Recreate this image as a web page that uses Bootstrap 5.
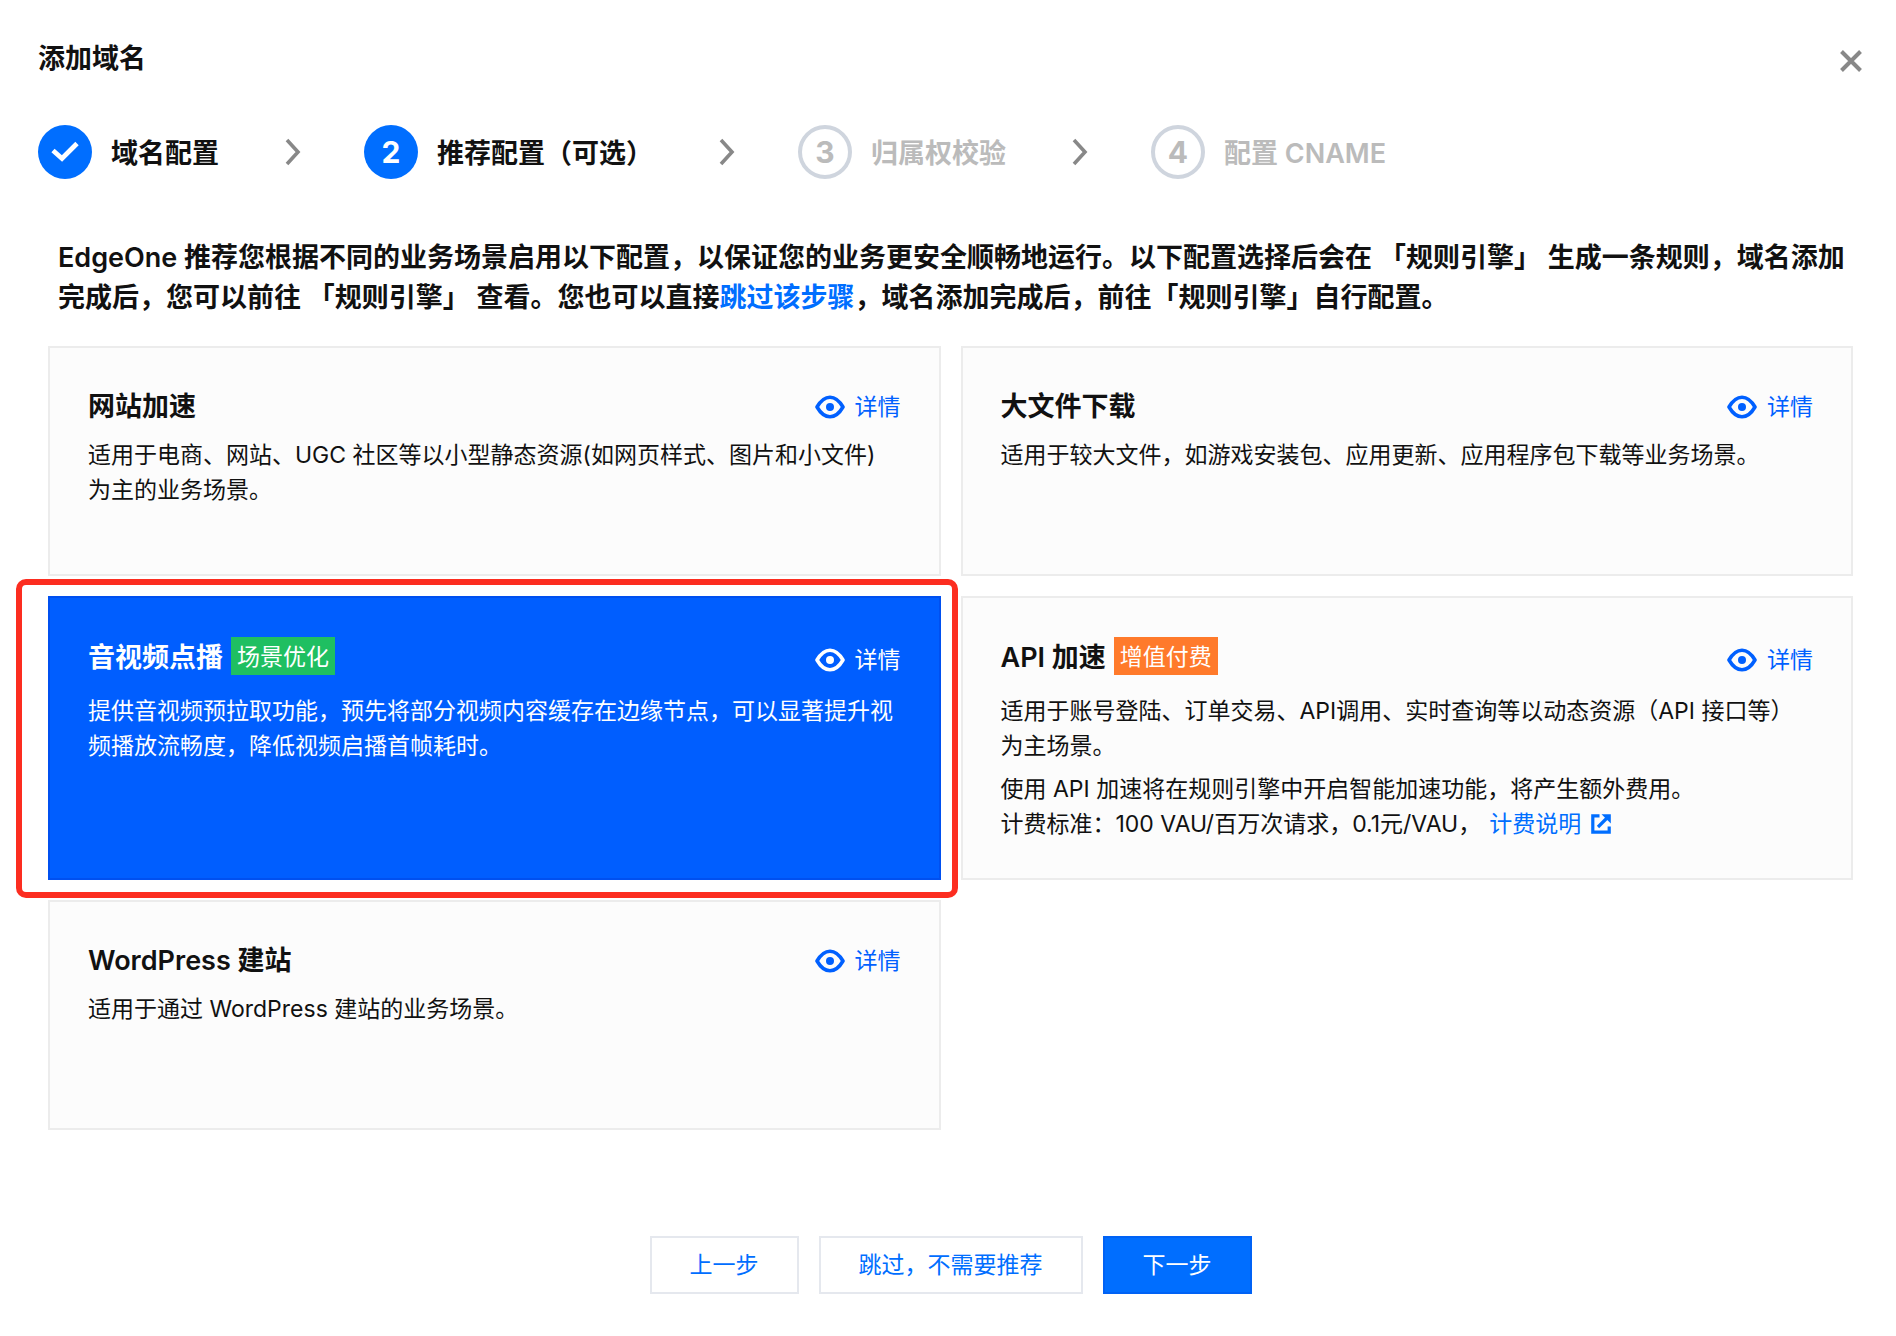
<!DOCTYPE html>
<html lang="zh-CN">
<head>
<meta charset="utf-8">
<meta name="viewport" content="width=device-width, initial-scale=1">
<title>添加域名</title>
<link href="https://cdn.jsdelivr.net/npm/bootstrap@5.3.0/dist/css/bootstrap.min.css" rel="stylesheet">
<style>
  body { font-family: Inter, "Noto Sans CJK SC", sans-serif; font-size: 23px; line-height: 35px; color: #111; background: #fff; }
  a { color: #006eff; text-decoration: none; }
  .page-pad { padding: 39px 33px 42px 38px; }
  .heading-text { font-size: 27px; line-height: 40px; font-weight: 600; margin: 0; }
  .close-btn { border: 0; background: none; padding: 4px 0 0; line-height: 0; color: #888; }
  .steps { margin-top: 46px; }
  .step-dot { width: 54px; height: 54px; font-size: 30px; font-weight: 700; background: #006eff; color: #fff; }
  .step-label { font-size: 27px; line-height: 40px; font-weight: 600; margin-left: 19px; padding-top: 3px; }
  .step-todo { color: #bbb; }
  .step-todo .step-dot { background: #fff; color: #bbb; border: 4px solid #cfd5de; }
  .step-arrow { margin: 0 63px 0 66px; color: #888; }
  .intro { font-size: 27px; line-height: 40px; font-weight: 600; margin: 59px 0 28px; padding-left: 20px; }
  .inner { padding: 0 10px; }
  .scene-grid { --bs-gutter-x: 20px; --bs-gutter-y: 20px; }
  .scene { min-height: 230px; padding: 39px 38px 36px; border: 2px solid #ececec; border-radius: 0; background: #fcfcfc; color: #111; }
  .scene-head { margin-bottom: 11px; }
  .has-tag { min-height: 46px; }
  .has-tag .scene-name { margin-bottom: 4px; }
  .tag { line-height: 36px; padding: 2px 6px 0; margin-bottom: 4px; color: #fff; background: #1fbf61; }
  .tag-paid { background: #ff7a2b; }
  .detail { gap: 10px; color: #0060ff; }
  .scene p { margin: 0; padding-right: 7px; }
  .scene p + p { margin-top: 8px; }
  .doc-link { margin-left: 8px; }
  .doc-link svg { margin: -4px 0 0 10px; }
  .scene-picked { background: #005eff; border-color: #0050f0; color: #fff; }
  .scene-picked .detail { color: #fff; }
  .focus-frame { position: relative; }
  .focus-frame::after { content: ""; position: absolute; inset: -17px -17px -18px -32px; border: 6px solid #fc2d20; border-radius: 10px; pointer-events: none; z-index: 2; }
  .actions { margin-top: 106px; gap: 20px; }
  .act { font-size: 23px; line-height: 34px; padding: 10px 38px; border-width: 2px; border-radius: 0; border-color: #e5e8ee; color: #006eff; background: #fff; }
  .act-main { background: #006eff; border-color: #0062f5; color: #fff; }
</style>
<script src="https://cdn.jsdelivr.net/npm/bootstrap@5.3.0/dist/js/bootstrap.bundle.min.js"></script>
</head>
<body>
<svg class="d-none" aria-hidden="true">
  <symbol id="eye" viewBox="0 0 30 24"><path d="M2 12C5.500 6 9.500 2.200 15 2.200S24.500 6 28 12C24.500 18 20.500 21.800 15 21.800S5.500 18 2 12Z" fill="none" stroke="currentColor" stroke-width="3.600" stroke-linejoin="round"/><circle cx="15" cy="12" r="4" fill="currentColor"/></symbol>
  <symbol id="chevron" viewBox="0 0 16 28"><path d="M2 2L13 14L2 26" fill="none" stroke="currentColor" stroke-width="3.600"/></symbol>
</svg>
<main class="page-pad">
  <header class="d-flex justify-content-between align-items-center">
    <h1 class="heading-text">添加域名</h1>
    <button class="close-btn" type="button" aria-label="关闭">
      <svg width="24" height="24" viewBox="0 0 24 24"><path d="M2.500 2.500L21.500 21.500M21.500 2.500L2.500 21.500" fill="none" stroke="currentColor" stroke-width="4"/></svg>
    </button>
  </header>

  <ol class="steps list-unstyled d-flex align-items-center mb-0">
    <li class="d-flex align-items-center">
      <span class="step-dot rounded-circle d-flex align-items-center justify-content-center"><svg width="28" height="22" viewBox="0 0 28 22"><path d="M2 9.500L11 17.500L26 2.500" fill="none" stroke="currentColor" stroke-width="4.800"/></svg></span>
      <span class="step-label">域名配置</span>
      <svg class="step-arrow" width="16" height="28"><use href="#chevron"/></svg>
    </li>
    <li class="d-flex align-items-center">
      <span class="step-dot rounded-circle d-flex align-items-center justify-content-center">2</span>
      <span class="step-label">推荐配置（可选）</span>
      <svg class="step-arrow" width="16" height="28"><use href="#chevron"/></svg>
    </li>
    <li class="d-flex align-items-center step-todo">
      <span class="step-dot rounded-circle d-flex align-items-center justify-content-center">3</span>
      <span class="step-label">归属权校验</span>
      <svg class="step-arrow" width="16" height="28"><use href="#chevron"/></svg>
    </li>
    <li class="d-flex align-items-center step-todo">
      <span class="step-dot rounded-circle d-flex align-items-center justify-content-center">4</span>
      <span class="step-label">配置 CNAME</span>
    </li>
  </ol>

  <p class="intro">EdgeOne 推荐您根据不同的业务场景启用以下配置，以保证您的业务更安全顺畅地运行。以下配置选择后会在 「规则引擎」 生成一条规则，域名添加完成后，您可以前往 「规则引擎」 查看。您也可以直接<a href="#">跳过该步骤</a>，域名添加完成后，前往「规则引擎」自行配置。</p>

  <div class="inner">
    <div class="row scene-grid">
      <div class="col-6">
        <section class="card scene h-100">
          <div class="scene-head d-flex justify-content-between align-items-center">
            <h2 class="heading-text">网站加速</h2>
            <a class="detail d-flex align-items-center" href="#"><svg width="30" height="24"><use href="#eye"/></svg>详情</a>
          </div>
          <p>适用于电商、网站、UGC 社区等以小型静态资源(如网页样式、图片和小文件)为主的业务场景。</p>
        </section>
      </div>
      <div class="col-6">
        <section class="card scene h-100">
          <div class="scene-head d-flex justify-content-between align-items-center">
            <h2 class="heading-text">大文件下载</h2>
            <a class="detail d-flex align-items-center" href="#"><svg width="30" height="24"><use href="#eye"/></svg>详情</a>
          </div>
          <p>适用于较大文件，如游戏安装包、应用更新、应用程序包下载等业务场景。</p>
        </section>
      </div>
      <div class="col-6">
        <div class="focus-frame h-100">
          <section class="card scene scene-picked h-100">
            <div class="scene-head has-tag d-flex justify-content-between align-items-center">
              <div class="scene-name d-flex align-items-center gap-2">
                <h2 class="heading-text">音视频点播</h2><span class="tag">场景优化</span>
              </div>
              <a class="detail d-flex align-items-center" href="#"><svg width="30" height="24"><use href="#eye"/></svg>详情</a>
            </div>
            <p>提供音视频预拉取功能，预先将部分视频内容缓存在边缘节点，可以显著提升视频播放流畅度，降低视频启播首帧耗时。</p>
          </section>
        </div>
      </div>
      <div class="col-6">
        <section class="card scene h-100">
          <div class="scene-head has-tag d-flex justify-content-between align-items-center">
            <div class="scene-name d-flex align-items-center gap-2">
              <h2 class="heading-text">API 加速</h2><span class="tag tag-paid">增值付费</span>
            </div>
            <a class="detail d-flex align-items-center" href="#"><svg width="30" height="24"><use href="#eye"/></svg>详情</a>
          </div>
          <p>适用于账号登陆、订单交易、API调用、实时查询等以动态资源（API 接口等）为主场景。</p>
          <p>使用 API 加速将在规则引擎中开启智能加速功能，将产生额外费用。<br>计费标准：100 VAU/百万次请求，0.1元/VAU，<a class="doc-link" href="#">计费说明<svg width="20" height="20" viewBox="0 0 20 20"><path d="M8.500 1.800H1.800V18.200H18.200V12.500" fill="none" stroke="currentColor" stroke-width="3.200"/><path d="M7 13L15.500 4.500" fill="none" stroke="currentColor" stroke-width="3.200"/><path d="M10.500 .2H19.800V9.500Z" fill="currentColor"/></svg></a></p>
        </section>
      </div>
      <div class="col-6">
        <section class="card scene h-100">
          <div class="scene-head d-flex justify-content-between align-items-center">
            <h2 class="heading-text">WordPress 建站</h2>
            <a class="detail d-flex align-items-center" href="#"><svg width="30" height="24"><use href="#eye"/></svg>详情</a>
          </div>
          <p>适用于通过 WordPress 建站的业务场景。</p>
        </section>
      </div>
    </div>
    <div class="actions d-flex justify-content-center">
      <button class="btn act" type="button">上一步</button>
      <button class="btn act" type="button">跳过，不需要推荐</button>
      <button class="btn act act-main" type="button">下一步</button>
    </div>
  </div>
</main>
</body>
</html>
